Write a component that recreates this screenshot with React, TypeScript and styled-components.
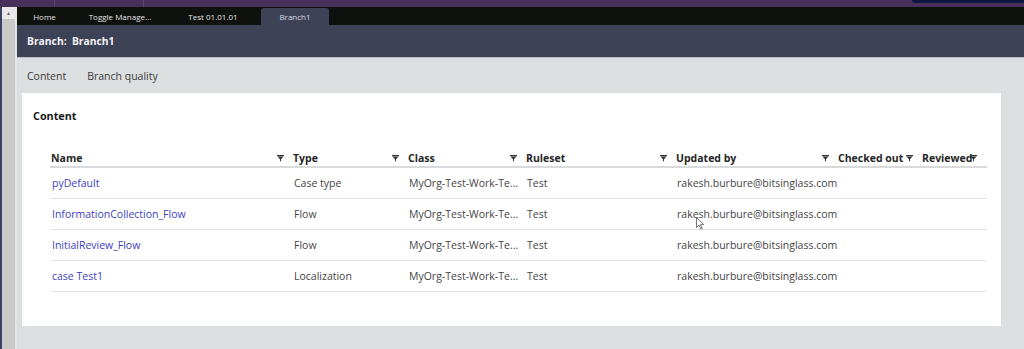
import styled, { createGlobalStyle } from 'styled-components';

const GlobalStyle = createGlobalStyle`
  html, body {
    margin: 0;
    padding: 0;
    height: 349px;
    overflow: hidden;
    background: #dcdfe0;
    font-family: 'Open Sans', 'Noto Sans', sans-serif;
  }
  #root {
    height: 349px;
  }
`;

interface Row {
  name: string;
  type: string;
  cls: string;
  ruleset: string;
  updatedBy: string;
}

const email = 'rakesh.burbure@bitsinglass.com';
const cls = 'MyOrg-Test-Work-Te...';

const rows: Row[] = [
  { name: 'pyDefault', type: 'Case type', cls, ruleset: 'Test', updatedBy: email },
  { name: 'InformationCollection_Flow', type: 'Flow', cls, ruleset: 'Test', updatedBy: email },
  { name: 'InitialReview_Flow', type: 'Flow', cls, ruleset: 'Test', updatedBy: email },
  { name: 'case Test1', type: 'Localization', cls, ruleset: 'Test', updatedBy: email },
];

const columns = ['Name', 'Type', 'Class', 'Ruleset', 'Updated by', 'Checked out', 'Reviewed'];

const FilterIcon = () => (
  <svg width="7" height="7" viewBox="0 0 7 7">
    <rect x="0" y="0" width="7" height="1.2" fill="#333" />
    <path d="M0.5 1.6 H6.5 L4 4.2 V6.6 L3 6 V4.2 Z" fill="#333" />
  </svg>
);

const Cursor = () => (
  <svg width="9" height="13" viewBox="0 0 9 13">
    <path d="M0.5 0.5 L0.5 10.5 L3 8.2 L4.8 12 L6.2 11.4 L4.4 7.7 L7.8 7.6 Z" fill="#fff" stroke="#555" strokeWidth="0.8" />
  </svg>
);

const App = () => {
  return (
    <>
      <GlobalStyle />
      <Page>
        <TopBar>
          <TopDivider $left={54} />
          <TopDivider $left={143} />
          <NavyCorner />
        </TopBar>
        <Body>
          <Scrollbar>
            <ScrollArrow>▲</ScrollArrow>
          </Scrollbar>
          <Main>
            <TabBar>
              <Tab $width={55}>Home</Tab>
              <Tab $width={96}>Toggle Manage...</Tab>
              <Tab $width={90}>Test 01.01.01</Tab>
              <Tab $width={68} $active>Branch1</Tab>
            </TabBar>
            <Header>Branch:&nbsp;&nbsp;Branch1</Header>
            <SubTabs>
              <SubTab>Content</SubTab>
              <SubTab>Branch quality</SubTab>
            </SubTabs>
            <Panel>
              <PanelTitle>Content</PanelTitle>
              <Table>
                <HeadRow>
                  {columns.map((c) => (
                    <HeadCell key={c}>
                      <span>{c}</span>
                      <FilterIcon />
                    </HeadCell>
                  ))}
                </HeadRow>
                {rows.map((r, i) => (
                  <DataRow key={r.name}>
                    <Cell>
                      <Link>{r.name}</Link>
                    </Cell>
                    <Cell>{r.type}</Cell>
                    <Cell>{r.cls}</Cell>
                    <Cell>{r.ruleset}</Cell>
                    <Cell $relative={i === 1}>
                      {r.updatedBy}
                      {i === 1 && (
                        <CursorWrap>
                          <Cursor />
                        </CursorWrap>
                      )}
                    </Cell>
                    <Cell />
                    <Cell />
                  </DataRow>
                ))}
              </Table>
            </Panel>
          </Main>
        </Body>
      </Page>
    </>
  );
};

export default App;

const Page = styled.div`
  height: 349px;
  display: flex;
  flex-direction: column;
`;

const TopBar = styled.div`
  position: relative;
  height: 7px;
  background: #47305a;
  flex-shrink: 0;
`;

const TopDivider = styled.div<{ $left: number }>`
  position: absolute;
  top: 0;
  left: ${(p) => p.$left}px;
  width: 1px;
  height: 7px;
  background: #5c4670;
`;

const NavyCorner = styled.div`
  position: absolute;
  top: 0;
  right: 0;
  width: 112px;
  height: 3px;
  background: #0e1744;
  border-bottom-left-radius: 4px;
`;

const Body = styled.div`
  flex: 1;
  display: flex;
  min-height: 0;
`;

const Scrollbar = styled.div`
  background: #c9cac8;
  border-left: 2px solid #3b4066;
  border-right: 2px solid #e4e5e4;
  box-sizing: border-box;
  width: 17px;
  flex-shrink: 0;
  display: flex;
  flex-direction: column;
  align-items: center;
`;

const ScrollArrow = styled.div`
  width: 100%;
  height: 12px;
  background: #e8e8e8;
  font-size: 5px;
  color: #666;
  text-align: center;
  line-height: 12px;
`;

const Main = styled.div`
  flex: 1;
  display: flex;
  flex-direction: column;
  min-width: 0;
`;

const TabBar = styled.div`
  height: 18px;
  background: #0f110e;
  display: flex;
  align-items: flex-end;
  flex-shrink: 0;
`;

const Tab = styled.div<{ $width: number; $active?: boolean }>`
  width: ${(p) => p.$width}px;
  height: 17px;
  margin-left: ${(p) => (p.$active ? 3 : 0)}px;
  background: ${(p) => (p.$active ? '#3e4257' : 'transparent')};
  border-radius: 3px 3px 0 0;
  color: ${(p) => (p.$active ? '#d6d8e0' : '#e2e2e2')};
  font-size: 8px;
  display: flex;
  align-items: center;
  justify-content: center;
  white-space: nowrap;
`;

const Header = styled.div`
  height: 32px;
  background: #3e4257;
  color: #f2f2f4;
  font-weight: 700;
  font-size: 10.3px;
  display: flex;
  align-items: center;
  padding-left: 10px;
  border-bottom: 1px solid #b8bcc4;
  flex-shrink: 0;
`;

const SubTabs = styled.div`
  height: 35px;
  display: flex;
  align-items: center;
  gap: 21px;
  padding-left: 10px;
  flex-shrink: 0;
`;

const SubTab = styled.div`
  font-size: 10.5px;
  color: #3a3a3a;
`;

const Panel = styled.div`
  margin: 0 23px 0 5px;
  height: 233px;
  background: #ffffff;
  box-sizing: border-box;
  padding: 15px 0 0 11px;
`;

const PanelTitle = styled.div`
  font-size: 10.8px;
  font-weight: 700;
  color: #1a1a1a;
  height: 16px;
  line-height: 16px;
`;

const gridCols = '242px 115px 118px 150px 162px 84px 66px';

const Table = styled.div`
  margin: 26px 0 0 17px;
  width: 937px;
`;

const HeadRow = styled.div`
  display: grid;
  grid-template-columns: ${gridCols};
  height: 16px;
  border-bottom: 2px solid #d9dadb;
`;

const HeadCell = styled.div`
  display: flex;
  align-items: center;
  justify-content: space-between;
  padding: 0 8px 0 1px;
  font-size: 10.5px;
  font-weight: 700;
  color: #262626;
  white-space: nowrap;
  &:last-child {
    justify-content: flex-start;
    padding-right: 0;
  }
  &:last-child svg {
    margin-left: -2px;
  }
`;

const DataRow = styled.div`
  display: grid;
  grid-template-columns: ${gridCols};
  height: 30px;
  border-bottom: 1px solid #e2e3e4;
`;

const Cell = styled.div<{ $relative?: boolean }>`
  position: ${(p) => (p.$relative ? 'relative' : 'static')};
  display: flex;
  align-items: center;
  padding: 0 2px;
  font-size: 10.5px;
  color: #454545;
  white-space: nowrap;
  min-width: 0;
`;

const Link = styled.span`
  color: #3a3fbf;
`;

const CursorWrap = styled.div`
  position: absolute;
  left: 21px;
  top: 18px;
  line-height: 0;
`;
